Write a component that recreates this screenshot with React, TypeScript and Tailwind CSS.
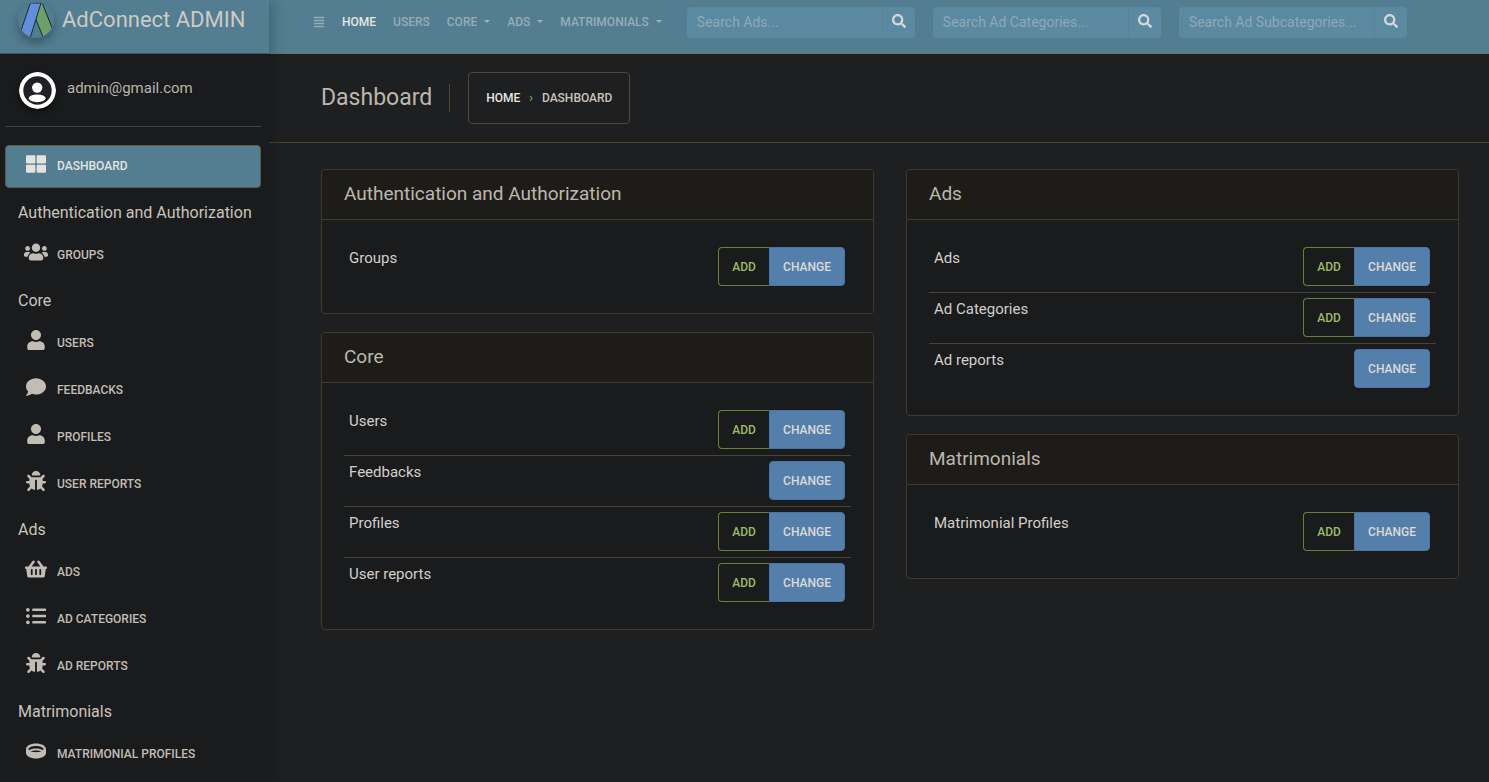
import { Fragment, type ReactNode } from "react";
import type { IconType } from "react-icons";
import {
  FaAlignJustify,
  FaBug,
  FaComment,
  FaListUl,
  FaRing,
  FaSearch,
  FaShoppingBasket,
  FaThLarge,
  FaUser,
  FaUsers,
} from "react-icons/fa";

type MenuItem = { label: string; icon: IconType; iconSize?: number };
type MenuGroup = { title: string; items: MenuItem[] };

const menu: MenuGroup[] = [
  {
    title: "Authentication and Authorization",
    items: [{ label: "Groups", icon: FaUsers, iconSize: 24 }],
  },
  {
    title: "Core",
    items: [
      { label: "Users", icon: FaUser },
      { label: "Feedbacks", icon: FaComment },
      { label: "Profiles", icon: FaUser },
      { label: "User reports", icon: FaBug },
    ],
  },
  {
    title: "Ads",
    items: [
      { label: "Ads", icon: FaShoppingBasket, iconSize: 22 },
      { label: "Ad Categories", icon: FaListUl },
      { label: "Ad reports", icon: FaBug },
    ],
  },
  { title: "Matrimonials", items: [{ label: "Matrimonial Profiles", icon: FaRing }] },
];

type Model = { name: string; add: boolean };

const leftCards: { title: string; models: Model[] }[] = [
  { title: "Authentication and Authorization", models: [{ name: "Groups", add: true }] },
  {
    title: "Core",
    models: [
      { name: "Users", add: true },
      { name: "Feedbacks", add: false },
      { name: "Profiles", add: true },
      { name: "User reports", add: true },
    ],
  },
];

const rightCards: { title: string; models: Model[] }[] = [
  {
    title: "Ads",
    models: [
      { name: "Ads", add: true },
      { name: "Ad Categories", add: true },
      { name: "Ad reports", add: false },
    ],
  },
  { title: "Matrimonials", models: [{ name: "Matrimonial Profiles", add: true }] },
];

function Logo() {
  return (
    <svg viewBox="0 0 36 36" className="size-9 shrink-0 rounded-full shadow-[0_5px_10px_rgba(0,0,0,0.3)]" aria-hidden="true">
      <defs>
        <clipPath id="logo-disc">
          <circle cx="18" cy="18" r="17.5" />
        </clipPath>
      </defs>
      <circle cx="18" cy="18" r="17.5" fill="#507d92" />
      <g clipPath="url(#logo-disc)" strokeWidth="1" stroke="#1b2a33">
        <path d="M20 1H24.2L36.5 32L25.8 37L17.2 15.5Z" fill="#6f9f69" />
        <path d="M12.4 1H23L12 36.5L1.5 33Z" fill="#628fdc" />
      </g>
    </svg>
  );
}

function Avatar() {
  return (
    <svg viewBox="0 0 38 38" className="size-[37px] shrink-0 rounded-full shadow-[0_3px_6px_rgba(0,0,0,0.5)]" aria-hidden="true">
      <circle cx="19" cy="19" r="19" fill="#fff" />
      <circle cx="19" cy="19" r="14.6" fill="#202127" />
      <circle cx="18.7" cy="16" r="5.3" fill="#fff" />
      <ellipse cx="18.7" cy="27" rx="8.6" ry="4" fill="#fff" />
    </svg>
  );
}

function Sidebar() {
  return (
    <aside className="relative z-10 w-[269px] shrink-0 bg-[#1a1b1c] shadow-[2px_0_14px_rgba(0,0,0,0.25)]">
      <a href="#" className="flex h-[54px] items-center gap-2 border-b border-[#45525a] bg-[#537d91] pb-[13px] pl-[18px] text-[22px] leading-6 text-[#cdcac4]">
        <Logo />
        <span>AdConnect ADMIN</span>
      </a>
      <div className="pr-2 pl-[5px]">
        <div className="flex h-[73px] items-center gap-[11px] border-b border-[#3f4141] pl-[14px] text-[#b9b4ab]">
          <Avatar />
          <a href="#" className="pb-1 text-[15px]">admin@gmail.com</a>
        </div>
        <nav className="mt-[18px] text-[#c1bdb5]">
          <a href="#" className="mb-1 flex h-[43px] items-center gap-[9px] rounded border border-[#5c5a45] bg-[#537d91] pb-[2px] pl-[18px] text-xs font-medium text-[#e5e3e0] uppercase">
            <span className="flex w-6 justify-center pb-1">
              <FaThLarge size={20} className="shrink-0" />
            </span>
            Dashboard
          </a>
          {menu.map((group) => (
            <Fragment key={group.title}>
              <h2 className="flex h-[41px] items-center pl-[13px] text-base leading-6 text-[#c8c4bd]">{group.title}</h2>
              {group.items.map(({ label, icon: Icon, iconSize = 20 }) => (
                <a key={label} href="#" className="mb-1 flex h-[43px] items-center gap-[9px] rounded pl-[19px] text-xs font-medium uppercase">
                  <span className="flex w-6 justify-center pb-[6px]">
                    <Icon size={iconSize} className="shrink-0" />
                  </span>
                  {label}
                </a>
              ))}
            </Fragment>
          ))}
        </nav>
      </div>
    </aside>
  );
}

function NavMenu({ children }: { children: ReactNode }) {
  return (
    <button type="button" className="flex items-center gap-[7px] uppercase">
      {children}
      <span className="mb-[2px] border-x-[3px] border-t-[3px] border-x-transparent border-t-[#9fb2bb]" />
    </button>
  );
}

function Search({ label }: { label: string }) {
  return (
    <form role="search" className="flex h-[31px] w-[228px] overflow-hidden rounded bg-[#5b899f]">
      <input
        type="text"
        aria-label={label}
        placeholder={`${label}...`}
        className="min-w-0 flex-1 border-r border-[#56849a] px-[10px] text-sm text-[#dfe5e8] outline-none placeholder:text-[#8daab8]"
      />
      <button type="submit" aria-label={label} className="flex w-8 items-center justify-center pb-0.5 text-[#d5d8d8]">
        <FaSearch size={14} />
      </button>
    </form>
  );
}

function Topbar() {
  return (
    <header className="flex h-[54px] items-center border-b border-[#6f6f66] bg-[#537d91] pb-[9px] pl-11 text-xs font-medium text-[#96adb8]">
      <nav className="flex items-center gap-[17px]">
        <button type="button" aria-label="Toggle sidebar">
          <FaAlignJustify size={12} />
        </button>
        <a href="#" className="text-[#e8e6e3]">HOME</a>
        <a href="#">USERS</a>
        <NavMenu>Core</NavMenu>
        <NavMenu>Ads</NavMenu>
        <NavMenu>Matrimonials</NavMenu>
      </nav>
      <div className="ml-[25px] flex gap-[18px] font-normal">
        <Search label="Search Ads" />
        <Search label="Search Ad Categories" />
        <Search label="Search Ad Subcategories" />
      </div>
    </header>
  );
}

function Card({ title, models }: { title: string; models: Model[] }) {
  return (
    <section className="rounded border border-[#3f3a2c] bg-[#1a1b1c]">
      <h2 className="flex h-[50px] items-center rounded-t border-b border-[#3f3a2c] bg-[#1e1c19] px-[22px] pb-[2px] text-[19px] leading-6 text-[#bcb7ae]">
        {title}
      </h2>
      <div className="px-[22px] pt-[22px] pb-[21px]">
        <table className="w-full border-collapse text-left">
          <tbody>
            {models.map((model) => (
              <tr key={model.name} className="border-t border-[#4a4331] first:border-t-0">
                <th scope="row" className="px-[5px] pt-[5px] pb-[6px] align-top text-[15px] leading-[22px] font-normal text-[#d3d0cb]">
                  {model.name}
                </th>
                <td className="px-[6px] pt-[5px] pb-[6px]">
                  <div className="flex h-[39px] justify-end text-xs font-medium">
                    {model.add && (
                      <a href="#" className="flex w-[51px] items-center justify-center rounded-l border border-r-0 border-[#69803a] text-[#9dbd64]">
                        ADD
                      </a>
                    )}
                    <a
                      href="#"
                      className={`flex w-[76px] items-center justify-center border border-[#4a74a3] bg-[#557fab] text-[#dcdad6] ${model.add ? "rounded-r" : "rounded"}`}
                    >
                      CHANGE
                    </a>
                  </div>
                </td>
              </tr>
            ))}
          </tbody>
        </table>
      </div>
    </section>
  );
}

export default function App() {
  return (
    <div className="flex min-h-screen bg-[#1e1f21] font-[Roboto,sans-serif]">
      <Sidebar />
      <div className="min-w-0 flex-1">
        <Topbar />
        <div className="flex h-[89px] items-center border-b border-[#4a4331] pl-[52px]">
          <h1 className="border-r border-[#4f4735] pr-[17px] text-[23px] leading-7 text-[#bcb7ae]">Dashboard</h1>
          <nav aria-label="Breadcrumb" className="ml-[18px] rounded border border-[#4f4735] p-[17px] text-xs font-medium text-[#c8c4bd]">
            <ol className="flex gap-[9px]">
              <li><a href="#" className="text-[#e8e6e3]">HOME</a></li>
              <li aria-hidden="true" className="text-[#a09a90]">›</li>
              <li>DASHBOARD</li>
            </ol>
          </nav>
        </div>
        <main className="grid grid-cols-2 items-start gap-8 pt-[26px] pr-[30px] pl-[52px]">
          <div className="flex flex-col gap-[18px]">
            {leftCards.map((card) => <Card key={card.title} {...card} />)}
          </div>
          <div className="flex flex-col gap-[18px]">
            {rightCards.map((card) => <Card key={card.title} {...card} />)}
          </div>
        </main>
      </div>
    </div>
  );
}
